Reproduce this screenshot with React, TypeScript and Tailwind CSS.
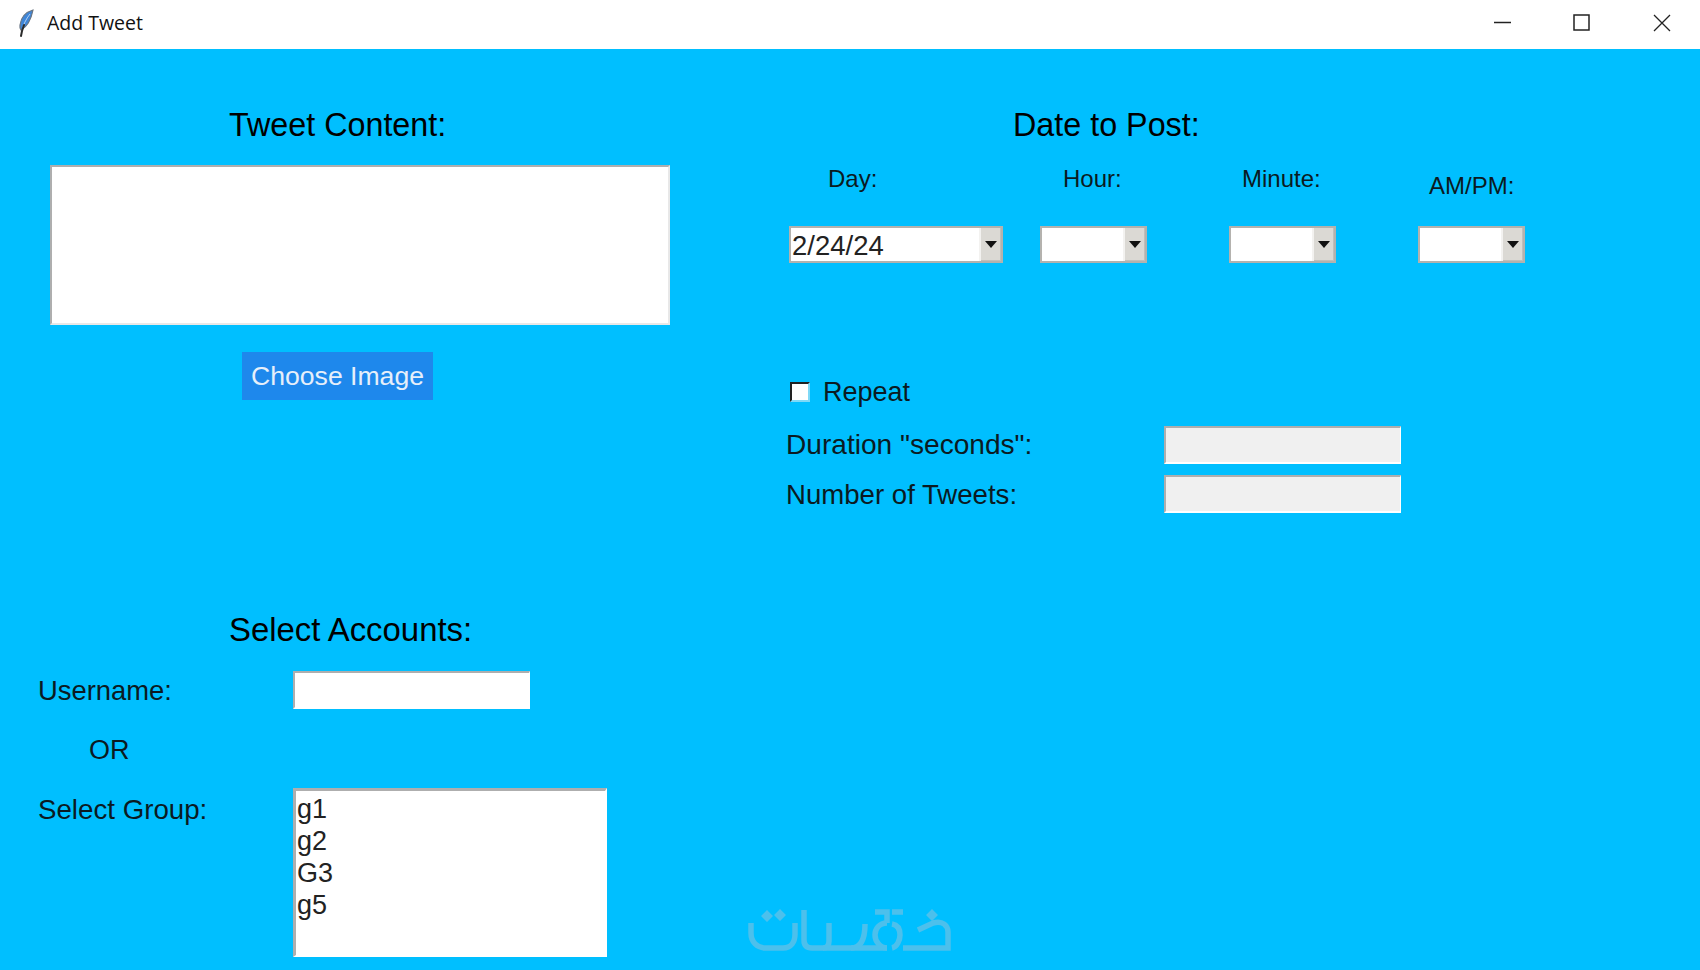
const arial = "font-['Liberation_Sans',Arial,sans-serif]";

function Feather() {
  return (
    <svg width="20" height="28" viewBox="0 0 20 28" className="ml-[16px]">
      <path d="M17 1C10 3 5 8 4 16c-.3 2.500 0 4 1 5 6-3 10-10 12-20z" fill="#3f86d8" stroke="#6a7480" strokeWidth="1.200" />
      <path d="M14 5C10 10 7 16 6 22" fill="none" stroke="#b5d0ee" strokeWidth="1" />
      <path d="M8 16L6 22l-1 5" fill="none" stroke="#2b2b2b" strokeWidth="2" strokeLinecap="round" />
    </svg>
  );
}

function TitleBar() {
  return (
    <div className="flex h-[49px] items-center bg-white pb-[3px]">
      <Feather />
      <span className="ml-[11px] text-[19.500px] text-[#111] font-['Open_Sans',sans-serif]">Add Tweet</span>
      <div className="ml-auto flex items-center pr-[29px]">
        <svg width="18" height="18" viewBox="0 0 18 18">
          <path d="M0 8.500h17" stroke="#222" strokeWidth="1.500" />
        </svg>
        <svg width="18" height="18" viewBox="0 0 18 18" className="ml-[61px]">
          <rect x="1" y="1" width="15" height="15" fill="none" stroke="#222" strokeWidth="1.500" />
        </svg>
        <svg width="18" height="18" viewBox="0 0 18 18" className="ml-[62px]">
          <path d="M1 1l16 16M17 1L1 17" stroke="#222" strokeWidth="1.300" />
        </svg>
      </div>
    </div>
  );
}

function Combo({ value, width }: { value?: string; width: string }) {
  return (
    <div className={`flex h-[37px] border-2 border-[#b4b2ae] bg-white ${width}`}>
      <div className="flex-1 overflow-hidden pl-[1px] text-[27.500px] leading-[35px] text-[#222]">{value}</div>
      <div className="flex w-[22px] items-center justify-center border-l-2 border-l-[#f3f2f0] bg-[#dbd9d4] shadow-[inset_-1px_-1px_0_#c0beba]">
        <svg width="12" height="7" viewBox="0 0 12 7">
          <path d="M0 0h12L6 7z" fill="#111" />
        </svg>
      </div>
    </div>
  );
}

function Entry({ className }: { className: string }) {
  return <div className={`border-t-2 border-l-2 border-t-[#aeaeae] border-l-[#aeaeae] border-r border-b-2 border-r-white border-b-white ${className}`} />;
}

function Watermark() {
  return (
    <svg width="240" height="80" viewBox="730 890 240 80" className="absolute left-[730px] top-[890px]">
      <g fill="none" stroke="#4cc0ec" strokeWidth="5.500">
        <path d="M751 923v10c0 9 6 15 15 15h17c8 0 12-6 12-14v-11" />
        <path d="M804 910v30q0 8 8 8h75" />
        <path d="M829 923v18q0 7-6 7" />
        <path d="M865 924q0 24-14 24" />
        <path d="M875 912h12v11" />
        <path d="M887 923c-8 0-12 6-12 12s5 13 12 13" />
        <path d="M892 912h11" />
        <path d="M892 924c6 1 8 6 8 11s-3 12-8 13" />
        <path d="M918 930l15-7c10-3 15 3 15 9v16h-45" />
      </g>
      <path d="M767 910l6 6-6 6-6-6zM780 909l6 6-6 6-6-6zM932 909l6 6-6 6-6-6z" fill="#4cc0ec" />
    </svg>
  );
}

export default function App() {
  return (
    <div className={`relative flex h-[970px] flex-col overflow-hidden bg-[#00bfff] text-[#0b1a22] ${arial}`}>
      <TitleBar />
      <div className="flex flex-1">
        {/* left column */}
        <div className="w-[786px]">
          <h2 className="ml-[229px] mt-[59px] text-[32.300px] leading-[34px] text-black">Tweet Content:</h2>
          <textarea
            readOnly
            className="ml-[50px] mt-[23px] block h-[160px] w-[620px] resize-none border-t-2 border-l-2 border-r-2 border-b-2 border-t-[#aeaeae] border-l-[#aeaeae] border-r-[#e8e8e8] border-b-[#e8e8e8] bg-white"
          />
          <button className="ml-[242px] mt-[27px] block h-[48px] w-[191px] bg-[#1e88ec] pt-[1px] text-[26.600px] text-[#e6effa]">Choose Image</button>

          <h2 className="ml-[229px] mt-[213px] text-[32.900px] leading-[34px] text-black">Select Accounts:</h2>
          <div className="ml-[38px] mt-[24px] flex items-center">
            <span className="w-[255px] pt-[1px] text-[27.400px] leading-[34px]">Username:</span>
            <Entry className="h-[38px] w-[237px] bg-white" />
          </div>
          <div className="ml-[89px] mt-[24px] text-[27px] leading-[34px]">OR</div>
          <div className="ml-[38px] mt-[21px] flex items-start">
            <span className="mt-[5px] w-[255px] text-[27.700px] leading-[34px]">Select Group:</span>
            <ul className="h-[169px] w-[314px] border-t-[3px] border-l-[3px] border-r-2 border-b-2 border-t-[#aeaeae] border-l-[#aeaeae] border-r-white border-b-white bg-white pl-[1px] pt-[2px] text-[27px] leading-[32px] text-[#222]">
              <li>g1</li>
              <li>g2</li>
              <li>G3</li>
              <li>g5</li>
            </ul>
          </div>
        </div>

        {/* right column */}
        <div className="flex-1">
          <h2 className="ml-[227px] mt-[59px] text-[32.300px] leading-[34px] text-black">Date to Post:</h2>
          <div className="ml-[3px] mt-[23px] flex h-[35px] items-start text-[24px] leading-[28px]">
            <div className="w-[251px] pl-[39px]">Day:</div>
            <div className="w-[189px] pl-[23px]">Hour:</div>
            <div className="w-[189px] pl-[13px]">Minute:</div>
            <div className="mt-[7px] pl-[11px]">AM/PM:</div>
          </div>
          <div className="ml-[3px] mt-[26px] flex">
            <Combo value="2/24/24" width="w-[214px]" />
            <Combo width="ml-[37px] w-[107px]" />
            <Combo width="ml-[82px] w-[107px]" />
            <Combo width="ml-[82px] w-[107px]" />
          </div>
          <label className="ml-[4px] mt-[112px] flex items-center text-[27px] leading-[34px]">
            <span className="h-[20px] w-[20px] border-2 border-t-[#222] border-l-[#222] border-r-[#7fd9f7] border-b-[#7fd9f7] bg-white" />
            <span className="ml-[13px]">Repeat</span>
          </label>
          <div className="mt-[17px] flex items-center">
            <span className="w-[378px] text-[28.100px] leading-[34px]">Duration "seconds":</span>
            <Entry className="h-[38px] w-[237px] bg-[#f0f0f0]" />
          </div>
          <div className="mt-[11px] flex items-center">
            <span className="w-[378px] pt-[1px] text-[27.600px] leading-[34px]">Number of Tweets:</span>
            <Entry className="h-[38px] w-[237px] bg-[#f0f0f0]" />
          </div>
        </div>
      </div>
      <Watermark />
    </div>
  );
}
